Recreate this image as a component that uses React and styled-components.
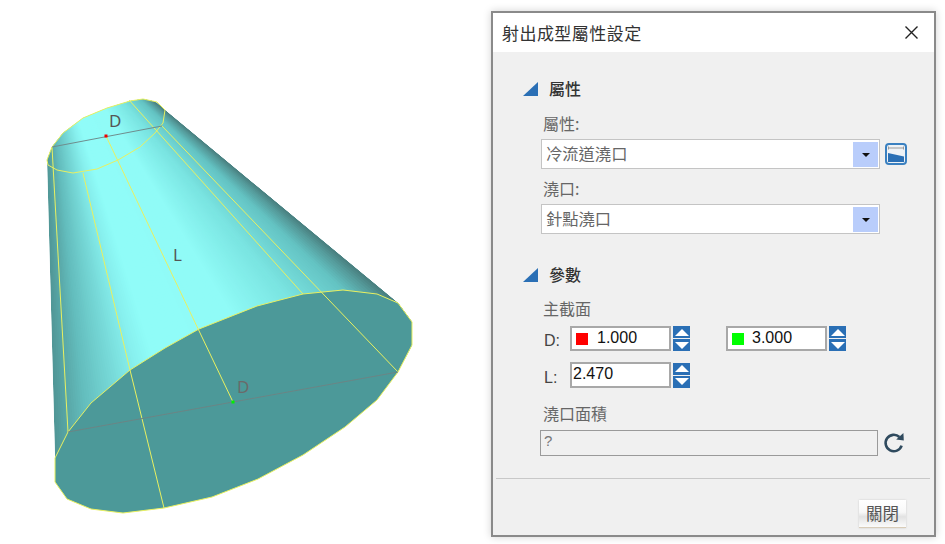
import React from 'react';
import styled, { createGlobalStyle } from 'styled-components';

const CJK = `"Noto Sans CJK TC", "Noto Sans", sans-serif`;
const LATIN = `"Liberation Sans", "Noto Sans CJK TC", sans-serif`;
const BLUE = '#2a6fb5';

const GlobalStyle = createGlobalStyle`
  html, body {
    margin: 0;
    padding: 0;
    background: #fff;
  }
  body {
    width: 945px;
    height: 544px;
    overflow: hidden;
    font-family: ${CJK};
  }
`;

const Page = styled.div`
  display: flex;
  align-items: flex-start;
  width: 945px;
  height: 544px;
`;

const Figure = styled.svg`
  flex: none;
  display: block;
  width: 491px;
  height: 544px;
`;

/* Dialog */
const Dialog = styled.div`
  flex: none;
  box-sizing: border-box;
  display: flex;
  flex-direction: column;
  width: 445px;
  height: 526px;
  margin-top: 11px;
  border: 2px solid #8a8a8a;
  background: #f0f0f0;
  box-shadow: 0 0 8px rgba(0, 0, 0, 0.18);
`;

const TitleBar = styled.div`
  display: flex;
  align-items: center;
  justify-content: space-between;
  flex: none;
  height: 39px;
  padding: 0 16px 0 9px;
  background: #fff;
  color: #333;
  font-size: 17px;
  line-height: 37px;
  letter-spacing: 0.45px;
`;

const CloseIcon = styled.svg`
  display: block;
  width: 13px;
  height: 13px;
`;

const Body = styled.div`
  flex: 1;
  display: flex;
  flex-direction: column;
  padding-top: 27px;
`;

const Section = styled.section`
  display: flex;
  flex-direction: column;
  margin-bottom: ${p => p.$gap || 0}px;
  padding-left: 30px;
`;

const Heading = styled.div`
  display: flex;
  align-items: flex-start;
  gap: 11px;
  height: 20px;
  color: #333;
  font-size: 16px;
  font-weight: 500;
  line-height: 18px;
`;

const Triangle = styled.span`
  flex: none;
  width: 15px;
  height: 14px;
  margin-top: 3px;
  background: ${BLUE};
  clip-path: polygon(100% 0, 100% 100%, 0 100%);
`;

const Fields = styled.div`
  display: flex;
  flex-direction: column;
  margin: 15px 0 0 18px;
`;

const FieldLabel = styled.div`
  height: 20px;
  margin: ${p => p.$top || 0}px 0 5px 2px;
  color: #666;
  font-size: 16px;
  line-height: ${p => p.$line || 18}px;
`;

const SelectRow = styled.div`
  display: flex;
  align-items: center;
  gap: 5px;
`;

const Select = styled.div`
  box-sizing: border-box;
  display: flex;
  align-items: stretch;
  justify-content: space-between;
  width: 339px;
  height: 30px;
  border: 1px solid #c4c4c4;
  padding: 2px 1px 1px 0;
  background: #fff;
  color: #666;
  font-size: 16.3px;
  line-height: 22px;
`;

const SelectText = styled.span`
  padding-left: 4px;
`;

const SelectArrow = styled.span`
  display: flex;
  align-items: center;
  justify-content: center;
  width: 25px;
  background: #b9cdfb;
  &::after {
    content: '';
    border-left: 4px solid transparent;
    border-right: 4px solid transparent;
    border-top: 4px solid #111;
  }
`;

const IconSvg = styled.svg`
  flex: none;
  display: block;
`;

const ParamRow = styled.div`
  display: flex;
  align-items: center;
  margin-top: ${p => p.$top || 0}px;
`;

const ParamLabel = styled.span`
  flex: none;
  box-sizing: border-box;
  width: 29px;
  padding: ${p => p.$drop}px 0 0 3px;
  color: #444;
  font-family: ${LATIN};
  font-size: 16px;
`;

const NumberBox = styled.div`
  box-sizing: border-box;
  display: flex;
  align-items: center;
  width: 101px;
  height: ${p => p.$tall ? 26 : 25}px;
  border: 2px solid #a8a8a8;
  padding: 0 0 2px ${p => p.$swatch ? 4 : 1}px;
  background: #fff;
  color: #111;
  font-family: ${LATIN};
  font-size: 16px;
`;

const Swatch = styled.span`
  flex: none;
  width: 12px;
  height: 12px;
  margin: 2px ${p => p.$space}px 0 0;
  background: ${p => p.$color};
`;

const Spinner = styled.div`
  flex: none;
  display: flex;
  flex-direction: column;
  gap: 1px;
  width: 17px;
  margin-left: 2px;
  margin-right: ${p => p.$after || 0}px;
`;

const SpinButton = styled.span`
  display: flex;
  align-items: center;
  justify-content: center;
  height: 12px;
  background: ${BLUE};
  &::after {
    content: '';
    border-left: 7px solid transparent;
    border-right: 7px solid transparent;
    ${p => p.$down ? 'border-top: 7px solid #fff;' : 'border-bottom: 7px solid #fff;'}
  }
`;

const AreaRow = styled.div`
  display: flex;
  align-items: center;
  gap: 5px;
  margin-left: -1px;
`;

const AreaBox = styled.div`
  box-sizing: border-box;
  width: 338px;
  height: 26px;
  border: 1px solid #9a9a9a;
  padding: 1px 3px;
  color: #777;
  font-family: ${LATIN};
  font-size: 15px;
  line-height: 18px;
`;

const Divider = styled.div`
  height: 1px;
  margin: 22px 4px 0 3px;
  background: #c8c8c8;
`;

const Footer = styled.div`
  display: flex;
  justify-content: flex-end;
  padding: 21px 28px 0 0;
`;

const CloseButton = styled.div`
  box-sizing: border-box;
  width: 47px;
  height: 28px;
  border-bottom: 1px solid #d8ccb8;
  background: linear-gradient(#ffffff 0%, #f8f8f8 45%, #e2e2e2 62%, #fbfbfb 100%);
  box-shadow: 0 0 2px rgba(0, 0, 0, 0.15);
  color: #555;
  font-size: 16.5px;
  line-height: 26px;
  text-align: center;
`;

/* Cone drawing */
const Label = styled.text`
  font-family: "Noto Sans", sans-serif;
  font-size: 17px;
  fill: ${p => p.$fill || '#555'};
`;

const YELLOW = '#e9f060';
const CAP = [
  [55, 458], [55, 482], [67, 499], [91, 509], [123, 513], [164, 508], [212, 497], [258, 479],
  [303, 455], [345, 427], [377, 400], [398, 372], [412, 345], [412, 322], [398, 303], [377, 294],
  [343, 290], [303, 294], [257, 306], [199, 329], [165, 348], [130, 370], [91, 403], [68, 432],
];
const RIM = [
  [47, 160], [52, 147], [63, 133], [83, 118], [107, 108], [130, 101], [143, 99], [157, 102],
  [165, 110], [163, 123], [155, 133], [140, 147], [118, 160], [97, 169], [73, 173], [57, 170], [48, 165],
];
const toPoints = list => list.map(p => p.join(',')).join(' ');

const RAMP = [
  [0, [80, 150, 150]], [0.1, [100, 190, 190]], [0.27, [135, 240, 238]], [0.33, [144, 252, 248]],
  [0.6, [144, 251, 247]], [0.78, [122, 228, 225]], [0.92, [100, 195, 195]], [0.97, [85, 155, 155]], [1, [72, 125, 125]],
];

const rampColor = t => {
  let i = 0;
  while (i < RAMP.length - 2 && t > RAMP[i + 1][0]) i++;
  const [t0, c0] = RAMP[i];
  const [t1, c1] = RAMP[i + 1];
  const k = (t - t0) / (t1 - t0);
  return `rgb(${c0.map((c, n) => Math.round(c + (c1[n] - c) * k)).join(',')})`;
};

const mix = (a, b, t) => [a[0] + (b[0] - a[0]) * t, a[1] + (b[1] - a[1]) * t];

// one quad per shade step, running from the small end to the large end of the cone
const STEPS = 140;
const STRIPS = Array.from({ length: STEPS }, (_, i) => {
  const end = t => {
    const top = mix([47, 160], [165, 110], t);
    const bottom = mix([55, 458], [398, 303], t);
    return [mix(bottom, top, 1.35), mix(top, bottom, 1.2)];
  };
  const [a0, a1] = end(i / STEPS);
  const [b0, b1] = end(Math.min(i + 4, STEPS) / STEPS);
  return { points: toPoints([a0, b0, b1, a1]), color: rampColor((i + 0.5) / STEPS) };
});

const Cone = () => (
  <Figure viewBox="0 0 491 544">
    <defs>
      <clipPath id="cone-outline">
        <polygon points="47,160 165,110 398,303 412,322 412,345 398,372 55,482 55,458" />
        <polygon points={toPoints(RIM)} />
      </clipPath>
    </defs>
    <g clipPath="url(#cone-outline)">
      {STRIPS.map((s, i) => <polygon key={i} points={s.points} fill={s.color} />)}
    </g>
    <polygon points={toPoints(CAP)} fill="#4c9999" stroke={YELLOW} strokeWidth="1" />
    <polygon points={toPoints(RIM)} fill="none" stroke={YELLOW} strokeWidth="1" strokeLinejoin="round" />
    <g stroke={YELLOW} strokeWidth="1" fill="none">
      <line x1="52" y1="147" x2="68" y2="432" />
      <polyline points="83,173 130,370 164,508" />
      <line x1="106" y1="136" x2="233" y2="402" />
      <line x1="129" y1="100" x2="303" y2="294" />
      <line x1="162" y1="126" x2="398" y2="372" />
    </g>
    <line x1="52" y1="147" x2="162" y2="126" stroke="#6f8d8d" strokeWidth="1" />
    <line x1="68" y1="432" x2="398" y2="372" stroke="#6b8585" strokeWidth="1" />
    <rect x="104.5" y="134.5" width="3" height="3" fill="#f00000" />
    <rect x="231.5" y="400.5" width="3" height="3" fill="#00f000" />
    <Label x="109" y="127">D</Label>
    <Label x="173" y="261">L</Label>
    <Label x="237" y="393" $fill="#6a6a6a">D</Label>
  </Figure>
);

/* Small icons */
const SectionIcon = () => (
  <IconSvg width="22" height="22" viewBox="0 0 22 22">
    <rect x="1" y="1" width="20" height="20" rx="3" fill="#eef2f6" stroke="#3a80c0" strokeWidth="2" />
    <path d="M3 5h16M3.5 3.5v3M18.5 3.5v3" stroke="#9a9a9a" strokeWidth="1" fill="none" />
    <polygon points="3,10 19,13.5 19,19 3,19" fill={BLUE} />
  </IconSvg>
);

const RefreshIcon = () => (
  <IconSvg width="22" height="22" viewBox="0 0 22 22">
    <path d="M18.6 13.6A8.2 8.2 0 1 1 16.4 5" fill="none" stroke="#2f4a5e" strokeWidth="2.6" />
    <polygon points="13.2,7.6 20.8,8.6 20.4,1" fill="#2f4a5e" />
  </IconSvg>
);

const Spin = ({ after }) => (
  <Spinner $after={after}>
    <SpinButton />
    <SpinButton $down />
  </Spinner>
);

export default function App() {
  return (
    <Page>
      <GlobalStyle />
      <Cone />
      <Dialog>
        <TitleBar>
          射出成型屬性設定
          <CloseIcon viewBox="0 0 13 13">
            <path d="M0.5 0.5l12 12M12.5 0.5l-12 12" stroke="#222" strokeWidth="1.4" fill="none" />
          </CloseIcon>
        </TitleBar>
        <Body>
          <Section $gap={31}>
            <Heading><Triangle />屬性</Heading>
            <Fields>
              <FieldLabel>屬性:</FieldLabel>
              <SelectRow>
                <Select>
                  <SelectText>冷流道澆口</SelectText>
                  <SelectArrow />
                </Select>
                <SectionIcon />
              </SelectRow>
              <FieldLabel $top={10}>澆口:</FieldLabel>
              <SelectRow>
                <Select>
                  <SelectText>針點澆口</SelectText>
                  <SelectArrow />
                </Select>
              </SelectRow>
            </Fields>
          </Section>
          <Section>
            <Heading><Triangle />參數</Heading>
            <Fields>
              <FieldLabel $line={16}>主截面</FieldLabel>
              <ParamRow $top={1}>
                <ParamLabel $drop={4}>D:</ParamLabel>
                <NumberBox $swatch><Swatch $color="#ff0000" $space={9} />1.000</NumberBox>
                <Spin after={36} />
                <NumberBox $swatch><Swatch $color="#00ff00" $space={8} />3.000</NumberBox>
                <Spin />
              </ParamRow>
              <ParamRow $top={11}>
                <ParamLabel $drop={6}>L:</ParamLabel>
                <NumberBox $tall>2.470</NumberBox>
                <Spin />
              </ParamRow>
              <FieldLabel $top={17} $line={16}>澆口面積</FieldLabel>
              <AreaRow>
                <AreaBox>?</AreaBox>
                <RefreshIcon />
              </AreaRow>
            </Fields>
          </Section>
          <Divider />
          <Footer>
            <CloseButton>關閉</CloseButton>
          </Footer>
        </Body>
      </Dialog>
    </Page>
  );
}
